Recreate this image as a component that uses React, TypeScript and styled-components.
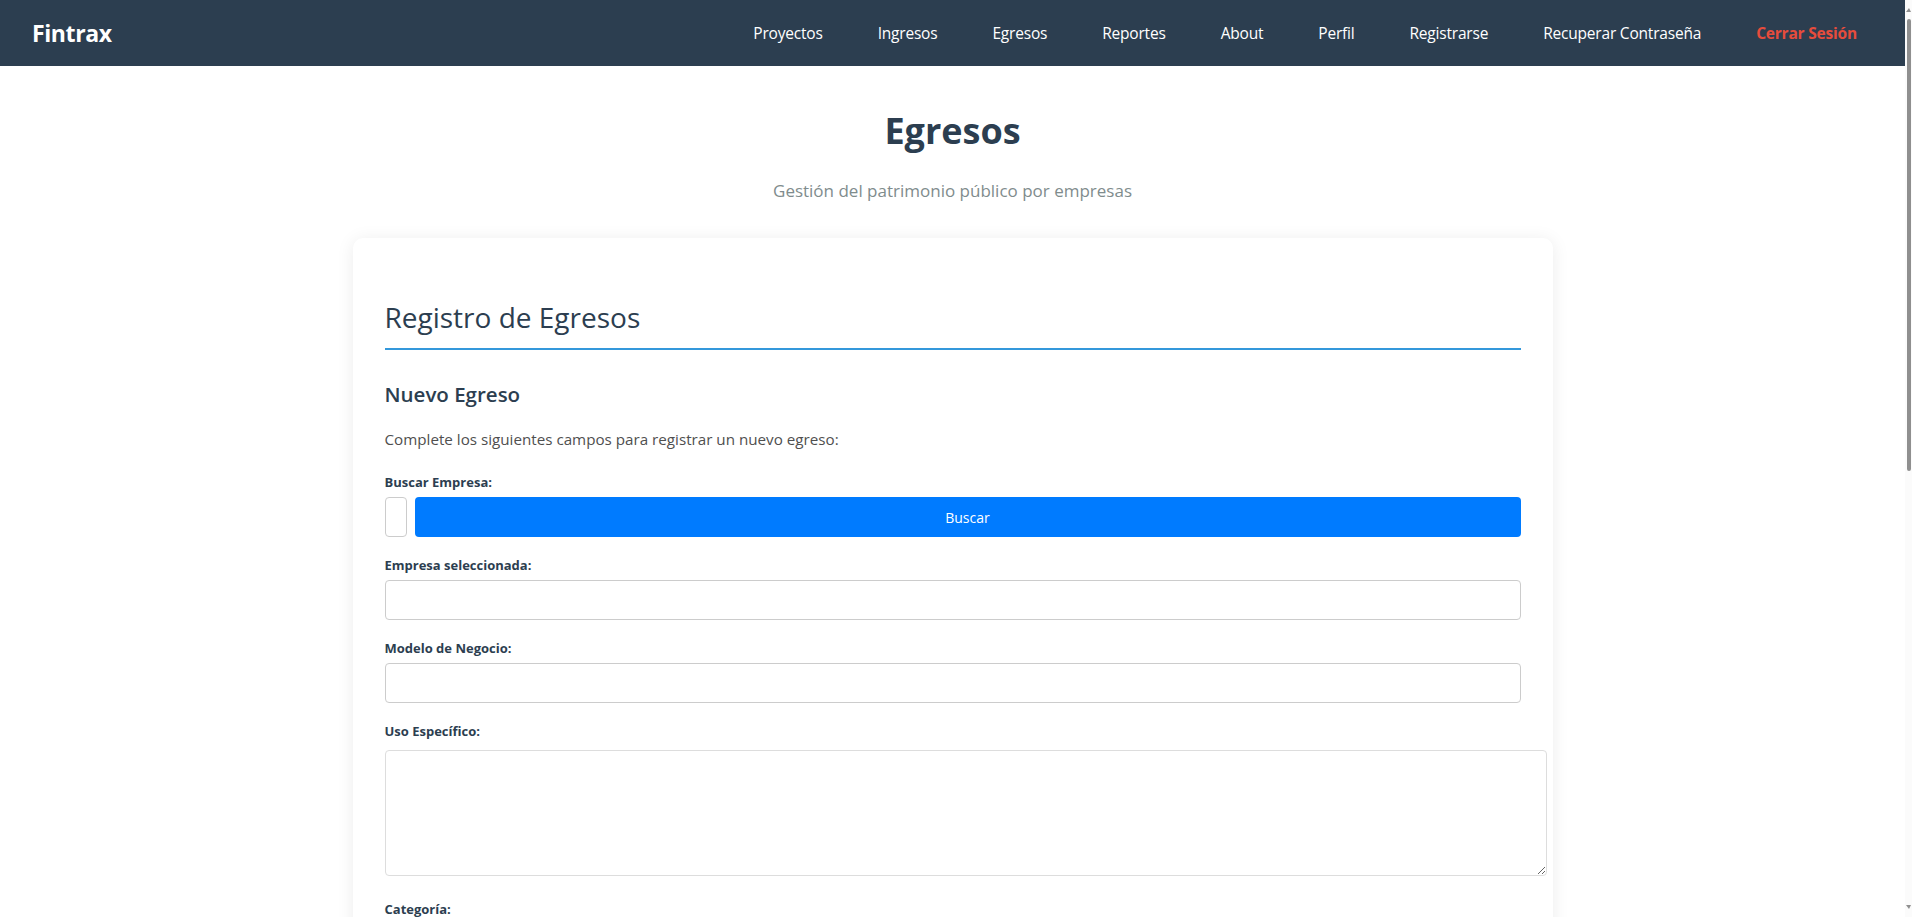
import React from "react";
import styled, { createGlobalStyle } from "styled-components";

const GlobalStyle = createGlobalStyle`
  body {
    margin: 0;
    padding-right: 7px;
    background: #ffffff;
    font-family: "Open Sans", "Noto Sans", sans-serif;
    color: #333;
  }
  * { box-sizing: border-box; }
`;

const ScrollTrack = styled.div`
  position: fixed;
  top: 0;
  right: 0;
  width: 7px;
  height: 100vh;
  background: #fbfbfb;
  z-index: 10;
`;

const ScrollThumb = styled.div`
  position: absolute;
  top: 19px;
  right: 1px;
  width: 4px;
  height: 452px;
  border-radius: 2px;
  background: #8f8f8f;
`;

const ArrowUp = styled.div`
  position: absolute;
  top: 8px;
  right: 1px;
  width: 0;
  height: 0;
  border-left: 3px solid transparent;
  border-right: 2px solid transparent;
  border-bottom: 4px solid #8f8f8f;
`;

const ArrowDown = styled.div`
  position: absolute;
  bottom: 8px;
  right: 1px;
  width: 0;
  height: 0;
  border-left: 3px solid transparent;
  border-right: 2px solid transparent;
  border-top: 4px solid #8f8f8f;
`;

const NavBar = styled.nav`
  height: 66px;
  background: #2c3e50;
  display: flex;
  align-items: center;
  justify-content: space-between;
  padding: 0 32px;
`;

const Brand = styled.div`
  color: #fff;
  font-size: 23px;
  font-weight: 700;
  letter-spacing: -0.4px;
`;

const NavLinks = styled.ul`
  display: flex;
  align-items: center;
  gap: 23px;
  list-style: none;
  margin: 0;
  padding: 0;
`;

const NavLink = styled.a<{ $danger?: boolean }>`
  display: block;
  padding: 8px 16px;
  color: ${(p) => (p.$danger ? "#e74c3c" : "#ffffff")};
  font-weight: ${(p) => (p.$danger ? 700 : 400)};
  font-size: 15.5px;
  letter-spacing: -0.2px;
  text-decoration: none;
`;

const Header = styled.header`
  text-align: center;
  padding-top: 41px;
`;

const PageTitle = styled.h1`
  margin: 0;
  font-size: 36px;
  line-height: 48px;
  font-weight: 700;
  color: #2c3e50;
`;

const Subtitle = styled.p`
  margin: 24px 0 0;
  font-size: 17px;
  line-height: 24px;
  font-weight: 500;
  color: #7f8c8d;
`;

const Card = styled.main`
  width: 1200px;
  margin: 35px auto 40px;
  background: #fff;
  border-radius: 10px;
  box-shadow: 0 2px 18px rgba(0, 0, 0, 0.08);
  padding: 32px;
`;

const SectionTitle = styled.h2`
  margin: 29px 0 0;
  font-size: 28px;
  line-height: 36px;
  font-weight: 400;
  color: #2c3e50;
  padding-bottom: 13px;
  border-bottom: 2px solid #3498db;
`;

const SubTitle = styled.h3`
  margin: 30px 0 0;
  font-size: 20.5px;
  line-height: 28px;
  font-weight: 600;
  color: #2c3e50;
`;

const Intro = styled.p`
  margin: 19px 0 22px;
  font-size: 15.2px;
  line-height: 24px;
  color: #4f4f4f;
`;

const Group = styled.div`
  margin-bottom: 19px;
`;

const Label = styled.label`
  display: block;
  font-size: 13px;
  line-height: 18px;
  font-weight: 700;
  color: #2c3e50;
  margin-bottom: 6px;
`;

const SearchRow = styled.div`
  display: flex;
  gap: 8px;
`;

const TinyInput = styled.input`
  width: 22px;
  height: 40px;
  border: 1px solid #ccc;
  border-radius: 4px;
  padding: 0;
`;

const SearchButton = styled.button`
  flex: 1;
  height: 40px;
  border: none;
  border-radius: 4px;
  background: #007bff;
  color: #fff;
  font-family: inherit;
  font-size: 14px;
`;

const TextInput = styled.input`
  display: block;
  width: 100%;
  height: 40px;
  border: 1px solid #ccc;
  border-radius: 4px;
  padding: 8px 12px;
  font-family: inherit;
  font-size: 15px;
`;

const TextArea = styled.textarea`
  box-sizing: content-box;
  width: 100%;
  height: 100px;
  margin: 4px 0 0;
  padding: 12px;
  border: 1px solid #ddd;
  border-radius: 4px;
  font-family: inherit;
  font-size: 15px;
  vertical-align: baseline;
`;

const Select = styled.select`
  display: block;
  width: 100%;
  height: 40px;
  border: 1px solid #ccc;
  border-radius: 4px;
  padding: 8px 12px;
  font-family: inherit;
  font-size: 15px;
  background: #fff;
`;

const navItems = [
  "Proyectos",
  "Ingresos",
  "Egresos",
  "Reportes",
  "About",
  "Perfil",
  "Registrarse",
  "Recuperar Contraseña",
];

export default function App() {
  return (
    <>
      <GlobalStyle />
      <ScrollTrack aria-hidden>
        <ArrowUp />
        <ScrollThumb />
        <ArrowDown />
      </ScrollTrack>
      <NavBar>
        <Brand>Fintrax</Brand>
        <NavLinks>
          {navItems.map((n) => (
            <li key={n}>
              <NavLink href="#">{n}</NavLink>
            </li>
          ))}
          <li>
            <NavLink href="#" $danger>
              Cerrar Sesión
            </NavLink>
          </li>
        </NavLinks>
      </NavBar>
      <Header>
        <PageTitle>Egresos</PageTitle>
        <Subtitle>Gestión del patrimonio público por empresas</Subtitle>
      </Header>
      <Card>
        <SectionTitle>Registro de Egresos</SectionTitle>
        <SubTitle>Nuevo Egreso</SubTitle>
        <Intro>Complete los siguientes campos para registrar un nuevo egreso:</Intro>
        <Group>
          <Label>Buscar Empresa:</Label>
          <SearchRow>
            <TinyInput type="text" />
            <SearchButton>Buscar</SearchButton>
          </SearchRow>
        </Group>
        <Group>
          <Label>Empresa seleccionada:</Label>
          <TextInput type="text" readOnly />
        </Group>
        <Group>
          <Label>Modelo de Negocio:</Label>
          <TextInput type="text" />
        </Group>
        <Group>
          <Label>Uso Específico:</Label>
          <TextArea />
        </Group>
        <Group>
          <Label>Categoría:</Label>
          <Select>
            <option>Seleccione una categoría</option>
          </Select>
        </Group>
        <Group>
          <Label>Monto:</Label>
          <TextInput type="number" />
        </Group>
        <Group>
          <Label>Fecha:</Label>
          <TextInput type="date" />
        </Group>
      </Card>
    </>
  );
}
